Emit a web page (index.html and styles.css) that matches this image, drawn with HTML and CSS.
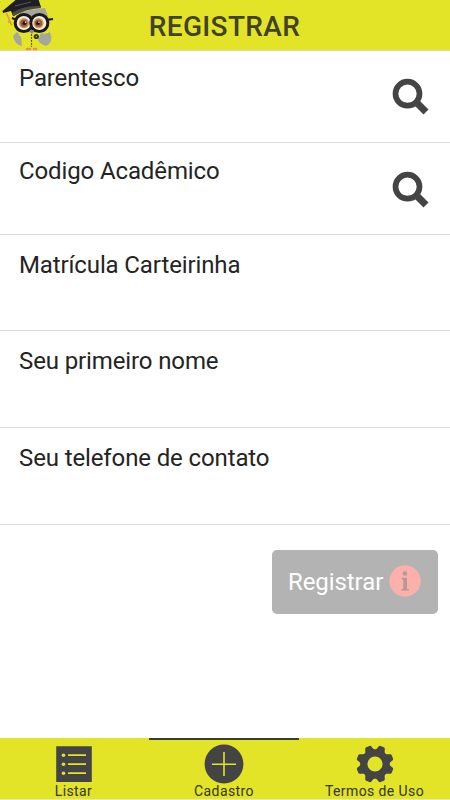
FILE: index.html
```html
<!DOCTYPE html>
<html lang="pt-BR">
<head>
<meta charset="utf-8">
<title>Registrar</title>
<link rel="stylesheet" href="styles.css">
</head>
<body>
<div class="app">
  <header class="header">
    <svg class="owl" viewBox="0 0 60 51">
      <path d="M20 13 L30 10 L45 8 L49 19 L47 29 L39 31 L32 33 L20 30Z" fill="#a5a69e"/>
      <path d="M41 33 Q46 35 50 32 Q54 42 46 46 Q38 43 38 39Z" fill="#a5a69e"/>
      <path d="M13 36 L17 32 L21 37 L22 46 Q15 45 13 36Z" fill="#a5a69e"/>
      <path d="M31.5 31V47" stroke="#55562a" stroke-width="1.2" stroke-dasharray="2 1"/>
      <path d="M2.5 11 L18 -2 H38 L41 7 L28 9 L13 16 L11 11 L3 13Z" fill="#1f1e20"/>
      <path d="M12 13 Q24 5 40 6 L41 8 Q25 9 14 16Z" fill="#4a484b"/>
      <path d="M15 6L31 2" stroke="#555458" stroke-width="1"/>
      <path d="M6.5 13 L11.5 25 M8 21 L12 25" fill="none" stroke="#e9973c" stroke-width="1.5"/>
      <path d="M12 18 L17 20 M46 20 L53 19" stroke="#19191c" stroke-width="2.2"/>
      <g fill="#f4eee2" stroke="#19191c" stroke-width="3">
        <circle cx="23.8" cy="23" r="8.6"/><circle cx="39.3" cy="23" r="8.6"/>
      </g>
      <g fill="#9c5a32" stroke="#d99466" stroke-width="1.5">
        <circle cx="24" cy="23.2" r="4.4"/><circle cx="38.5" cy="23.2" r="4.4"/>
      </g>
      <g fill="#221713"><circle cx="24.5" cy="23.2" r="1.9"/><circle cx="38" cy="23.2" r="1.9"/></g>
      <g fill="#fff"><circle cx="25.5" cy="22.2" r=".7"/><circle cx="39" cy="22.2" r=".7"/></g>
      <path d="M29.5 30H34L32 34Z" fill="#85877c"/>
      <circle cx="36.3" cy="36.5" r="2.6" fill="#38391d"/>
      <circle cx="36.3" cy="36.5" r=".8" fill="#a4a632"/>
      <path d="M27 49H30 M34 49H36" stroke="#ec913c" stroke-width="2.6" stroke-linecap="round"/>
    </svg>
    <h1 class="title">REGISTRAR</h1>
  </header>
  <main class="form">
    <div class="field field-first"><span class="label">Parentesco</span>
      <svg class="search" viewBox="0 0 38 38"><circle cx="15.5" cy="15.7" r="12" fill="none" stroke="#444" stroke-width="5.7"/><path d="M24 24L34 34" stroke="#444" stroke-width="7"/></svg>
    </div>
    <div class="field field-second"><span class="label">Codigo Acadêmico</span>
      <svg class="search" viewBox="0 0 38 38"><circle cx="15.5" cy="15.7" r="12" fill="none" stroke="#444" stroke-width="5.7"/><path d="M24 24L34 34" stroke="#444" stroke-width="7"/></svg>
    </div>
    <div class="field"><span class="label">Matrícula Carteirinha</span></div>
    <div class="field field-tall"><span class="label">Seu primeiro nome</span></div>
    <div class="field field-tall"><span class="label">Seu telefone de contato</span></div>
    <button class="submit" type="button"><span>Registrar</span>
      <svg class="info" viewBox="0 0 32 32"><circle cx="16" cy="16" r="15.7" fill="#fbb0ab"/><g fill="#b19a98"><circle cx="16" cy="8.5" r="2.2"/><path d="M12.5 12.7H18V23.8L20 24.5V25.5H12.3V24.5L14.3 23.8V14.7L12.5 14Z"/></g></svg>
    </button>
  </main>
  <nav class="tabs">
    <div class="tab">
      <svg class="icon" viewBox="0 0 40 40"><path d="M2.2 2.3H37.8V38H2.2Z" fill="#444"/><g fill="#e3e427"><circle cx="9.5" cy="11.2" r="1.8"/><circle cx="9.5" cy="20.2" r="1.8"/><circle cx="9.5" cy="29.2" r="1.8"/></g><path d="M14 11.2H32M14 20.2H32M14 29.2H32" stroke="#e3e427" stroke-width="1.7"/></svg>
      <span>Listar</span>
    </div>
    <div class="tab active">
      <svg class="icon" viewBox="0 0 40 40"><circle cx="20" cy="20" r="19.4" fill="#444"/><path d="M8 20.3H32M20 8V32" stroke="#e3e427" stroke-width="1.6"/></svg>
      <span>Cadastro</span>
    </div>
    <div class="tab">
      <svg class="icon" viewBox="-20 -20 40 40">
        <defs><path id="tooth" d="M-6 -11L-4 -15.5L-3.4 -17.5Q-3 -18.8 -1.7 -18.8H1.7Q3 -18.8 3.4 -17.5L4 -15.5L6 -11Z"/></defs>
        <g fill="#444"><use href="#tooth" transform="rotate(22.5)"/><use href="#tooth" transform="rotate(67.5)"/><use href="#tooth" transform="rotate(112.5)"/><use href="#tooth" transform="rotate(157.5)"/><use href="#tooth" transform="rotate(202.5)"/><use href="#tooth" transform="rotate(247.5)"/><use href="#tooth" transform="rotate(292.5)"/><use href="#tooth" transform="rotate(337.5)"/></g>
        <circle r="11.2" fill="none" stroke="#444" stroke-width="7.2"/>
      </svg>
      <span>Termos de Uso</span>
    </div>
  </nav>
</div>
</body>
</html>
```
FILE: styles.css
```css
* { box-sizing: border-box; }
body { margin: 0; background: #fff; font-family: Roboto, sans-serif; color: #242424; }
.app { width: 450px; height: 800px; display: flex; flex-direction: column; overflow: hidden; }
.header { position: relative; height: 51px; flex: none; background: #e3e427; border-bottom: 1px solid #dedfa6; display: flex; justify-content: center; }
.owl { position: absolute; left: 0; top: 0; width: 60px; height: 51px; }
.title { margin: 0; padding-right: 1px; font-size: 28px; font-weight: 500; line-height: 53px; letter-spacing: .35px; color: #41422b; white-space: nowrap; }
.form { flex: 1; display: flex; flex-direction: column; }
.field { flex: none; height: 96px; padding: 14px 20px 0 19px; border-bottom: 1px solid #dcdcdc; display: flex; justify-content: space-between; }
.field-first { height: 92px; padding-top: 11px; }
.field-second { height: 92px; padding-top: 12px; }
.field-tall { height: 97px; padding-top: 14px; }
.label { font-size: 24px; line-height: 32px; letter-spacing: -.12px; white-space: nowrap; }
.search { width: 38px; height: 38px; margin-top: 16px; }
.submit { align-self: flex-end; width: 166px; height: 64px; margin: 25px 12px 0 0; padding: 0 0 1px 16px; border: 0; border-radius: 5px; background: #b3b3b3; color: #fff; font: 24px/32px Roboto, sans-serif; letter-spacing: -.08px; display: flex; align-items: center; gap: 6px; }
.info { width: 32px; height: 32px; flex: none; margin-top: -2px; }
.tabs { flex: none; height: 62px; background: #e3e427; border-bottom: 1px solid #e9e9ac; display: flex; }
.tab { width: 150px; display: flex; flex-direction: column; align-items: center; padding-top: 6px; font-size: 14px; line-height: 16px; letter-spacing: .4px; color: #34351f; white-space: nowrap; }
.tab:first-child { width: 149px; padding-right: 2px; }
.tab.active { box-shadow: inset 0 2px #3c3c30; }
.tab:last-child { width: 151px; }
.icon { width: 40px; height: 40px; flex: none; }
.tab span { margin-top: -1px; }
```
